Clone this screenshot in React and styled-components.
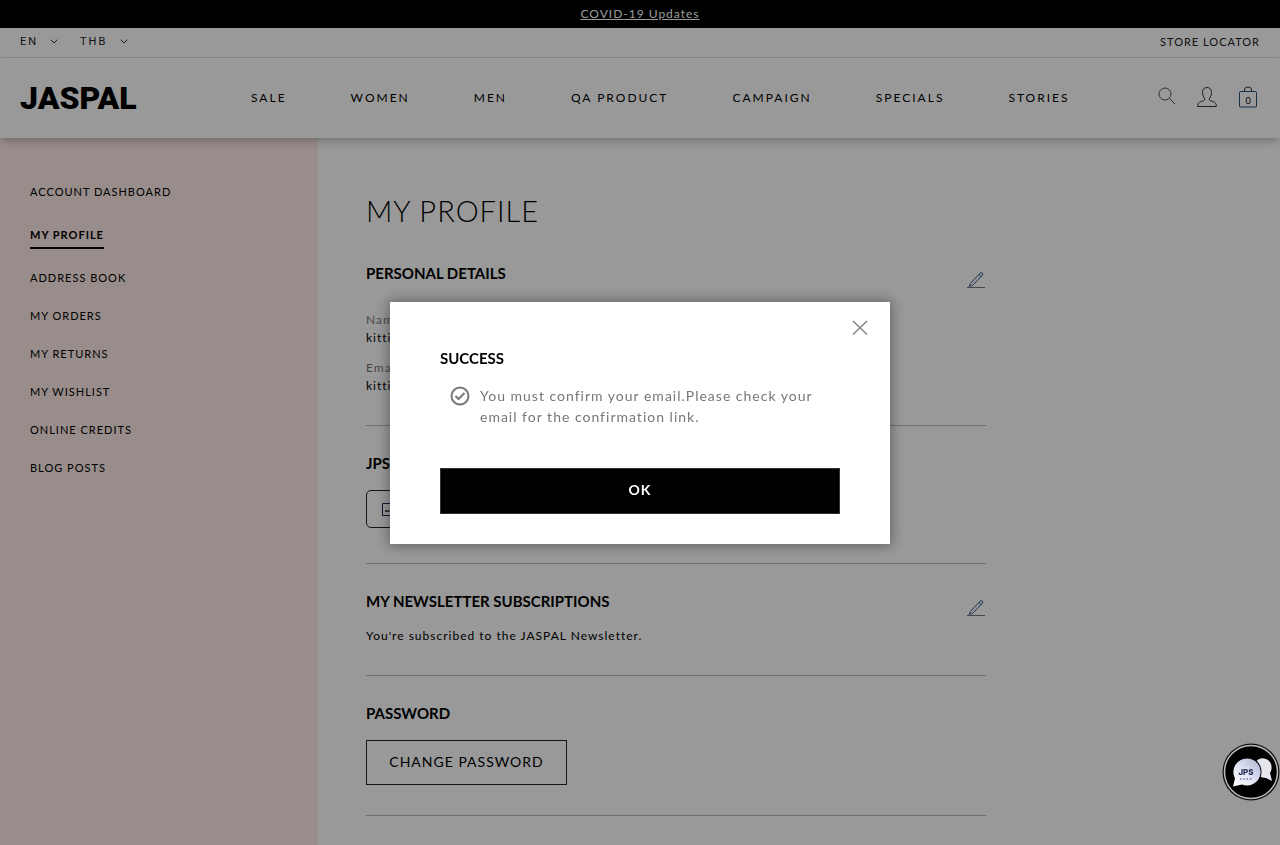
import React from "react";
import styled, { createGlobalStyle } from "styled-components";

const Global = createGlobalStyle`
  *, *::before, *::after { box-sizing: border-box; }
  body {
    margin: 0;
    background: #fff;
    color: #000;
    font-family: Lato, "Noto Sans", sans-serif;
    font-size: 12px;
    line-height: 18px;
    letter-spacing: 1px;
  }
  h1, h2, p, ul, dl, dd { margin: 0; padding: 0; }
  ul { list-style: none; }
  a { color: inherit; text-decoration: none; }
  button { font: inherit; letter-spacing: inherit; color: inherit; cursor: pointer; }
`;

const Page = styled.div`
  display: flex;
  flex-direction: column;
  height: 100vh;
  overflow: hidden;
`;

const Banner = styled.div`
  flex: none;
  background: #000;
  color: #fff;
  text-align: center;
  line-height: 28px;
  a { text-decoration: underline; }
`;

const UtilityBar = styled.div`
  flex: none;
  display: flex;
  align-items: center;
  justify-content: space-between;
  height: 30px;
  padding: 0 20px 2px;
  border-bottom: 1px solid #e0e0e0;
  color: #222;
  font-size: 11px;
`;

const Selectors = styled.div`
  display: flex;
  gap: 22px;
`;

const SelectWrap = styled.label`
  display: flex;
  align-items: center;
  svg { margin-left: -8px; pointer-events: none; }
`;

const Select = styled.select`
  appearance: none;
  border: 0;
  padding: 0;
  width: ${(p) => p.$width}px;
  background: transparent;
  color: #222;
  font: 11px/18px Roboto, sans-serif;
  letter-spacing: 2px;
`;

const Header = styled.header`
  flex: none;
  position: relative;
  display: flex;
  align-items: center;
  height: 80px;
  padding: 0 22px 0 20px;
  background: #fff;
  box-shadow: 0 5px 8px -2px rgba(0, 0, 0, 0.25);
`;

const Logo = styled.a`
  width: 115px;
  font-family: Roboto, sans-serif;
  font-size: 32px;
  line-height: 40px;
  font-weight: 900;
  letter-spacing: 0;
`;

const Nav = styled.nav`
  display: flex;
  flex: 1;
  gap: 64px;
  margin-left: 116px;
  letter-spacing: 2px;
`;

const Tools = styled.div`
  display: flex;
  align-items: center;
  gap: 21px;
  padding-bottom: 2px;
`;

const IconButton = styled.button`
  display: flex;
  border: 0;
  padding: 0;
  background: none;
`;

const Body = styled.div`
  flex: 1;
  display: flex;
  min-height: 0;
`;

const Sidebar = styled.aside`
  flex: 0 0 318px;
  padding: 45px 30px;
  background: #fdebe6;
  font-size: 11px;
`;

const Menu = styled.ul`
  display: flex;
  flex-direction: column;
  align-items: flex-start;
  gap: 20px;
`;

const MenuItem = styled.li`
  ${(p) => p.$active && `
    margin-top: 5px;
    padding-bottom: 3px;
    border-bottom: 2px solid #000;
    font-weight: 700;
  `}
`;

const Main = styled.main`
  flex: 1;
  padding: 52px 48px 0;
`;

const Content = styled.div`
  max-width: 620px;
`;

const Title = styled.h1`
  margin-bottom: 4px;
  font-size: 29px;
  line-height: 42px;
  font-weight: 300;
`;

const Section = styled.section`
  display: flex;
  flex-direction: column;
  align-items: flex-start;
  gap: ${(p) => p.$gap || 17}px;
  padding: 27px 0 ${(p) => p.$bottom || 30}px;
  border-bottom: 1px solid #bbb;
`;

const SectionHead = styled.div`
  display: flex;
  justify-content: space-between;
  align-self: stretch;
  height: 20px;
`;

const Heading = styled.h2`
  font-size: 15px;
  line-height: 20px;
  font-weight: 700;
  letter-spacing: 0;
`;

const EditLink = styled.a`
  padding-top: 8px;
`;

const Details = styled.dl`
  display: flex;
  flex-direction: column;
  gap: 12px;
  dt { color: #777; }
`;

const OutlineButton = styled.button`
  height: 45px;
  min-width: 201px;
  padding: 0 20px 2px;
  border: 1px solid #222;
  background: transparent;
  font-size: 14px;
`;

const CardButton = styled.button`
  display: flex;
  align-items: center;
  gap: 10px;
  height: 38px;
  padding: 0 15px;
  border: 1px solid #222;
  border-radius: 5px;
  background: transparent;
`;

const Overlay = styled.div`
  position: fixed;
  inset: 0;
  display: flex;
  align-items: center;
  justify-content: center;
  background: rgba(0, 0, 0, 0.4);
`;

const Dialog = styled.div`
  position: relative;
  width: 500px;
  max-width: 100%;
  padding: 46px 50px 30px;
  background: #fff;
  box-shadow: 0 0 12px 2px rgba(0, 0, 0, 0.35);
`;

const Close = styled(IconButton)`
  position: absolute;
  top: 18px;
  right: 22px;
`;

const Message = styled.div`
  display: flex;
  gap: 10px;
  margin: 17px 0 41px;
  padding-left: 10px;
  color: #777;
  font-size: 14px;
  line-height: 21px;
  svg { flex: none; margin-top: 1px; }
`;

const OkButton = styled.button`
  display: block;
  width: 100%;
  height: 46px;
  padding: 0 0 2px;
  border: 1px solid #333;
  background: #000;
  color: #fff;
  font-size: 14px;
  font-weight: 700;
`;

const Chat = styled.button`
  position: fixed;
  right: 0;
  bottom: 44px;
  display: flex;
  padding: 0;
  border: 0;
  background: none;
`;

const Chevron = () => (
  <svg width="8" height="5" viewBox="0 0 8 5" fill="none" stroke="#333"><path d="M.7.7 4 4 7.3.7" /></svg>
);

const Pencil = () => (
  <svg width="20" height="18" viewBox="0 0 20 18" fill="none" stroke="#2a5a86">
    <path d="M4.500 12.300 14.300 2q1-.8 2 .1t.2 2L6.800 14.200 3.300 15.500ZM13 3.500l2.300 2.200" />
    <path d="M1 16.500h18" stroke="#777" />
  </svg>
);

const menu = ["Account Dashboard", "My Profile", "Address Book", "My Orders", "My Returns", "My Wishlist", "Online Credits", "Blog Posts"];
const nav = ["Sale", "Women", "Men", "QA Product", "Campaign", "Specials", "Stories"];

export default function App() {
  return (
    <>
      <Global />
      <Page>
        <Banner><a href="#covid">COVID-19 Updates</a></Banner>
        <UtilityBar>
          <Selectors>
            <SelectWrap>
              <Select $width={38} aria-label="Language" defaultValue="EN"><option>EN</option></Select>
              <Chevron />
            </SelectWrap>
            <SelectWrap>
              <Select $width={48} aria-label="Currency" defaultValue="THB"><option>THB</option></Select>
              <Chevron />
            </SelectWrap>
          </Selectors>
          <a href="#stores">STORE LOCATOR</a>
        </UtilityBar>
        <Header>
          <Logo href="#home">JASPAL</Logo>
          <Nav>{nav.map((n) => <a key={n} href="#nav">{n.toUpperCase()}</a>)}</Nav>
          <Tools>
            <IconButton aria-label="Search">
              <svg width="18" height="22" viewBox="0 0 18 22" fill="none" stroke="#555"><circle cx="7" cy="8" r="6" /><path d="m11.500 12.500 5.500 5.500" /></svg>
            </IconButton>
            <IconButton aria-label="Account">
              <svg width="20" height="22" viewBox="0 0 20 22" fill="none" stroke="#333">
                <path d="M.7 20.500c0-3 .8-4.200 3.500-5 2.500-.7 3.600-1 3.600-2.300 0-1.200-2.300-2.700-2.300-6.700C5.500 3.300 7.300 1.500 10 1.500s4.500 1.800 4.500 5c0 4-2.300 5.500-2.300 6.700 0 1.300 1.100 1.600 3.600 2.300 2.700.8 3.500 2 3.500 5Z" />
              </svg>
            </IconButton>
            <IconButton aria-label="Bag">
              <svg width="20" height="22" viewBox="0 0 20 22" fill="none" stroke="#24527e">
                <rect x="1.500" y="5.500" width="17" height="15.500" rx="1" />
                <path d="M6.500 5.500V4q0-3 3.500-3t3.500 3v1.500" stroke="#333" />
                <text x="10" y="18" textAnchor="middle" fontSize="9" fontFamily="Lato" letterSpacing="0" fill="#000" stroke="none">0</text>
              </svg>
            </IconButton>
          </Tools>
        </Header>
        <Body>
          <Sidebar>
            <Menu>
              {menu.map((m) => (
                <MenuItem key={m} $active={m === "My Profile"}><a href="#account">{m.toUpperCase()}</a></MenuItem>
              ))}
            </Menu>
          </Sidebar>
          <Main>
            <Content>
              <Title>MY PROFILE</Title>
              <Section $gap={28}>
                <SectionHead>
                  <Heading>PERSONAL DETAILS</Heading>
                  <EditLink href="#edit" aria-label="Edit personal details"><Pencil /></EditLink>
                </SectionHead>
                <Details>
                  <div><dt>Name</dt><dd>kitti</dd></div>
                  <div><dt>Email</dt><dd>kitti</dd></div>
                </Details>
              </Section>
              <Section $bottom={35}>
                <Heading>JPS</Heading>
                <CardButton>
                  <svg width="20" height="13" viewBox="0 0 20 13" fill="none" stroke="#225"><path d="M.5.500h19v12H.5Z" /><path d="M3 8.500h7M3 7.500h4" stroke="#555" /></svg>
                  JPS
                </CardButton>
              </Section>
              <Section $gap={16}>
                <SectionHead>
                  <Heading>MY NEWSLETTER SUBSCRIPTIONS</Heading>
                  <EditLink href="#edit" aria-label="Edit newsletter subscriptions"><Pencil /></EditLink>
                </SectionHead>
                <p>You're subscribed to the JASPAL Newsletter.</p>
              </Section>
              <Section>
                <Heading>PASSWORD</Heading>
                <OutlineButton>CHANGE PASSWORD</OutlineButton>
              </Section>
            </Content>
          </Main>
        </Body>
      </Page>
      <Overlay>
        <Dialog role="dialog" aria-modal="true" aria-labelledby="dialog-title">
          <Close aria-label="Close">
            <svg width="16" height="16" viewBox="0 0 16 16" stroke="#888" strokeWidth="1.600"><path d="m1 1 14 13.500M15 1 1 14.500" /></svg>
          </Close>
          <Heading id="dialog-title">SUCCESS</Heading>
          <Message>
            <svg width="20" height="20" viewBox="0 0 20 20" fill="none" stroke="#777" strokeWidth="2"><circle cx="10" cy="10" r="8.500" /><path d="m5.500 10 3 3 6-6" /></svg>
            <p>You must confirm your email.Please check your email for the confirmation link.</p>
          </Message>
          <OkButton>OK</OkButton>
        </Dialog>
      </Overlay>
      <Chat aria-label="Chat with JPS">
        <svg width="58" height="58" viewBox="0 0 58 58">
          <defs><linearGradient id="bubble" x1="0" y1="1" x2="1" y2="0"><stop stopColor="#fff" /><stop offset=".5" stopColor="#dfe2f2" /><stop offset="1" stopColor="#a9afd0" /></linearGradient></defs>
          <circle cx="29" cy="29" r="28.500" fill="#111" />
          <circle cx="29" cy="29" r="26.500" fill="#000" stroke="#bbb" strokeWidth="1.500" />
          <path d="M33 20c2-4 7-6 11-4 6 2 7 10 4 14l2 8-6-3c-6 0-11-4-11-8Z" fill="#e6e6ee" />
          <circle cx="24" cy="29" r="15.500" fill="#000" />
          <path d="M25 15.500a13.500 13.500 0 1 1-5 26l-9 2 2-8A13.500 13.500 0 0 1 25 15.500Z" fill="url(#bubble)" />
          <text x="24" y="32" textAnchor="middle" fontFamily="Inter" fontWeight="800" fontSize="8" letterSpacing="0" fill="#2c3158">JPS</text>
          <path d="M18 36h12" stroke="#6a70a0" strokeWidth="1.500" strokeDasharray="1.500 1.800" />
        </svg>
      </Chat>
    </>
  );
}
